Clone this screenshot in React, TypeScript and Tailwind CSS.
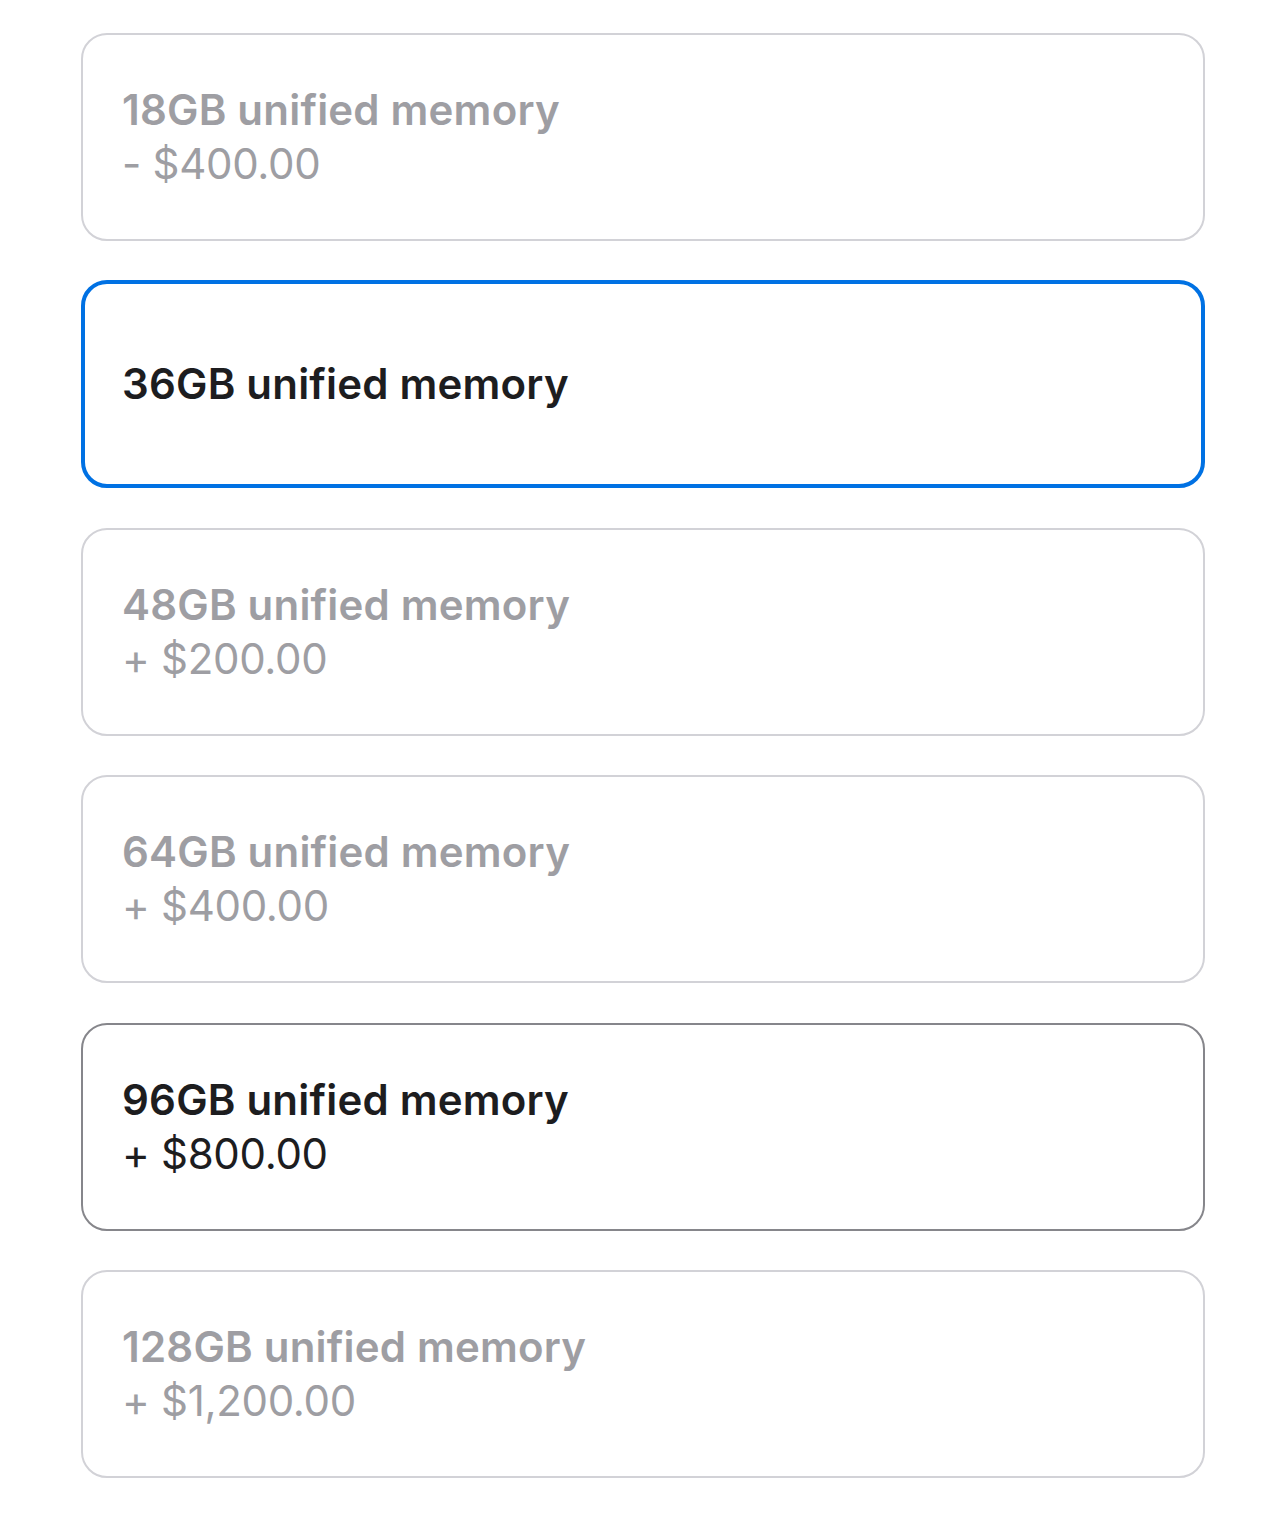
const options = [
  { title: '18GB unified memory', price: '- $400.00', state: 'disabled' },
  { title: '36GB unified memory', price: '', state: 'selected' },
  { title: '48GB unified memory', price: '+ $200.00', state: 'disabled' },
  { title: '64GB unified memory', price: '+ $400.00', state: 'disabled' },
  { title: '96GB unified memory', price: '+ $800.00', state: 'available' },
  { title: '128GB unified memory', price: '+ $1,200.00', state: 'disabled' },
];

const App = () => {
  return (
    <div className="min-h-[1513px] bg-white pt-[33px] pl-[81px] pr-[79px] font-['Inter','Liberation_Sans',sans-serif]">
      <div className="flex flex-col gap-[39.4px]">
        {options.map((o) => {
          const border =
            o.state === 'selected'
              ? 'border-4 border-[#0071e3] px-[37px]'
              : o.state === 'available'
                ? 'border-2 border-[#86868b] px-[39px]'
                : 'border-2 border-[#d2d2d7] px-[39px]';
          const text = o.state === 'disabled' ? 'text-[#9e9ea3]' : 'text-[#1d1d1f]';
          return (
            <div
              key={o.title}
              className={`h-[208px] rounded-[26px] flex flex-col justify-center ${border} ${text}`}
            >
              <div className="text-[42px] leading-[54px] font-semibold tracking-[0.2px]">{o.title}</div>
              {o.price && <div className="text-[42px] leading-[54px] font-normal tracking-[-0.3px]">{o.price}</div>}
            </div>
          );
        })}
      </div>
    </div>
  );
};

export default App;
